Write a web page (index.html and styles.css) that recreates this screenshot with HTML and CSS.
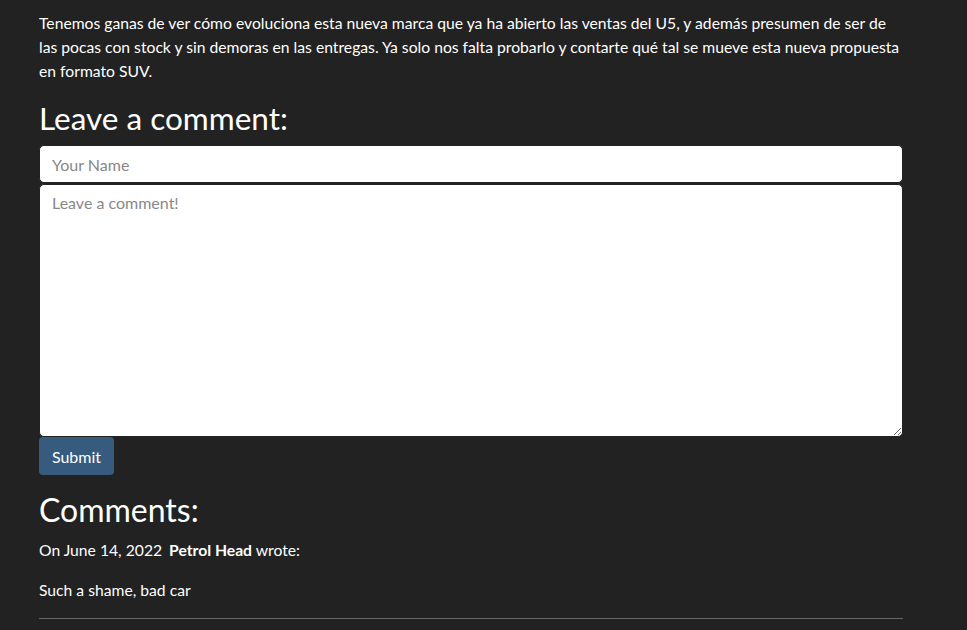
FILE: index.html
```html
<!DOCTYPE html>
<html>
<head>
<meta charset="utf-8">
<link rel="stylesheet" href="styles.css">
</head>
<body>
<main class="container">
  <p class="article-text">Tenemos ganas de ver cómo evoluciona esta nueva marca que ya ha abierto las ventas del U5, y además presumen de ser de las pocas con stock y sin demoras en las entregas. Ya solo nos falta probarlo y contarte qué tal se mueve esta nueva propuesta en formato SUV.</p>
  <h2 class="section-title">Leave a comment:</h2>
  <form class="comment-form">
    <input class="form-control" type="text" placeholder="Your Name">
    <textarea class="form-control form-textarea" placeholder="Leave a comment!"></textarea>
    <div><button class="btn-primary" type="button">Submit</button></div>
  </form>
  <h2 class="section-title comments-title">Comments:</h2>
  <div class="comment">
    <p class="comment-meta">On June 14, 2022 <strong class="author">Petrol Head</strong> wrote:</p>
    <p class="comment-body">Such a shame, bad car</p>
    <hr class="divider">
  </div>
</main>
</body>
</html>
```
FILE: styles.css
```css
html, body {
  margin: 0;
  padding: 0;
  background: #222222;
}
body {
  font-family: Lato, "Open Sans", sans-serif;
  font-size: 15.7px;
  line-height: 24px;
  color: #ffffff;
}
.container {
  width: 864px;
  padding: 11px 0 0 39px;
}
.article-text {
  margin: 0 0 0;
}
.section-title {
  font-weight: 400;
  font-size: 31.5px;
  line-height: 38px;
  margin: 16px 0 8px;
}
.comment-form {
  display: flex;
  flex-direction: column;
}
.form-control {
  box-sizing: border-box;
  width: 864px;
  border: 1px solid #222222;
  border-radius: 5px;
  background: #fff;
  font-family: Lato, sans-serif;
  font-size: 16px;
  color: #444;
  padding: 6px 12px;
  margin: 0;
}
.form-control::placeholder {
  color: #888888;
}
input.form-control {
  height: 38px;
}
.form-textarea {
  height: 253px;
  margin-top: 1px;
  resize: vertical;
  line-height: 24px;
  padding-top: 6px;
}
.btn-primary {
  background: #375a7f;
  color: #fff;
  border: none;
  border-radius: 4px;
  font-family: Lato, sans-serif;
  font-size: 16px;
  height: 38px;
  width: 75px;
  padding: 0;
  display: block;
}
.comments-title {
  font-size: 32px;
  margin-top: 16px;
  margin-bottom: 9px;
}
.comment-meta {
  margin: 0 0 16px;
}
.author {
  margin-left: 3px;
}
.comment-body {
  margin: 0 0 16px;
}
.divider {
  border: none;
  border-top: 1px solid #666;
  margin: 0;
}
```
